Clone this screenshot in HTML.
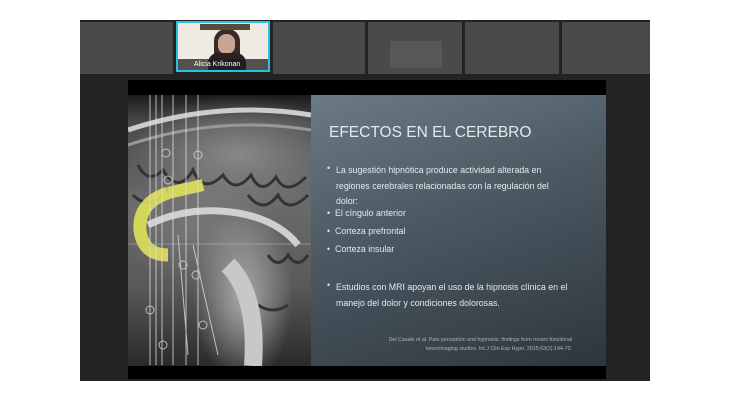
<!DOCTYPE html>
<html><head><style>
body{margin:0;width:730px;height:400px;background:#fff;position:relative;overflow:hidden;font-family:"Liberation Sans",sans-serif}
.outer{position:absolute;left:80px;top:20px;width:570px;height:361px;background:#232323}
.tile{position:absolute;top:22px;height:52px;background:#4a4a4a}
.slide{position:absolute;left:128px;top:80px;width:478px;height:299px;background:#000}
.brain{position:absolute;left:128px;top:95px;width:183px;height:271px;overflow:hidden;background:
radial-gradient(ellipse 50px 90px at 115px 200px,#aaa,transparent),
radial-gradient(ellipse 110px 60px at 110px 60px,#888,transparent),
radial-gradient(ellipse 80px 60px at 70px 130px,#777,transparent),
linear-gradient(#1a1a1a,#4a4a4a 10%,#6a6a6a 40%,#5a5a5a 70%,#2a2a2a)}
.panel{position:absolute;left:311px;top:95px;width:295px;height:271px;background:linear-gradient(160deg,#6b7b86 0%,#4b5862 45%,#2d363d 100%)}
.t{position:absolute;color:#e6e9ea;white-space:nowrap}
</style></head><body>
<div class="outer"></div>
<div class="tile" style="left:80px;width:93px"></div>
<div class="tile" style="left:176px;width:94px;background:#f0ebe2;border:2px solid #2bc0e0;top:21px;height:51px;box-sizing:border-box;overflow:hidden">
 <div style="position:absolute;left:36px;top:6px;width:26px;height:34px;border-radius:12px 12px 4px 4px;background:#3a2b28"></div>
 <div style="position:absolute;left:40px;top:11px;width:17px;height:20px;border-radius:8px;background:#c9a593"></div>
 <div style="position:absolute;left:30px;top:30px;width:38px;height:20px;border-radius:10px 10px 0 0;background:#2a2220"></div>
 <div style="position:absolute;left:22px;top:1px;width:50px;height:6px;background:#5a4a3a"></div>
 <div style="position:absolute;left:0;bottom:0;width:100%;height:11px;background:rgba(30,30,30,.75);color:#fff;font-size:7px;line-height:11px;padding-left:16px;box-sizing:border-box">Alicia Krikonan</div>
</div>
<div class="tile" style="left:273px;width:92px"></div>
<div class="tile" style="left:368px;width:94px"><div style="position:absolute;left:22px;top:19px;width:52px;height:27px;background:#575757"></div></div>
<div class="tile" style="left:465px;width:94px"></div>
<div class="tile" style="left:562px;width:88px"></div>
<div class="slide"></div>
<div class="brain">
<svg width="183" height="271" style="position:absolute;left:0;top:0">
<path d="M0 35 Q90 5 183 20" stroke="#ccc" stroke-width="5" fill="none"/>
<path d="M0 50 Q90 20 183 35" stroke="#999" stroke-width="3" fill="none"/>
<g stroke="#333" stroke-width="3" fill="none">
<path d="M10 70 q10 20 25 5 q15 25 30 0 q10 25 30 5 q12 20 28 0 q10 22 25 2 q10 20 30 0"/>
<path d="M5 100 q15 15 30 0 M120 100 q15 20 30 0 q10 20 30 0"/>
<path d="M140 160 q10 15 20 0 q10 15 20 0 M130 210 q15 10 30 0"/>
</g>
<path d="M20 130 Q60 110 110 118 Q150 125 170 150" stroke="#d0d0d0" stroke-width="7" fill="none"/>
<path d="M100 170 Q130 200 125 271" stroke="#c8c8c8" stroke-width="18" fill="none"/>
<path d="M40 98 Q10 108 12 135 Q15 160 40 160" stroke="#dfe257" stroke-width="13" fill="none" opacity=".9"/>
<path d="M40 98 L75 90" stroke="#dfe257" stroke-width="12" fill="none" opacity=".9"/>
<g stroke="#ddd" stroke-width="1" fill="none" opacity=".8">
<path d="M22 0V270M28 0V270M34 0V270M45 0V270M58 0V270M70 0V270M50 140L60 260M65 150L90 260"/>
<circle cx="38" cy="58" r="4"/><circle cx="40" cy="85" r="4"/><circle cx="70" cy="60" r="4"/><circle cx="55" cy="170" r="4"/><circle cx="68" cy="180" r="4"/><circle cx="22" cy="215" r="4"/><circle cx="75" cy="230" r="4"/><circle cx="35" cy="250" r="4"/>
</g>
<path d="M0 149H183" stroke="#bbb" stroke-width=".6"/>
</svg></div>
<div class="panel"></div>
<div class="t" style="left:329px;top:124px;font-size:15.5px">EFECTOS EN EL CEREBRO</div>
<div style="position:absolute;left:327px;top:163px;font-size:8.8px;color:#e6e9ea">
<div style="position:absolute;left:0;top:0">•</div><div style="position:absolute;left:9px;top:0;white-space:nowrap;line-height:15.5px">La sugestión hipnótica produce actividad alterada en<br>regiones cerebrales relacionadas con la regulación del<br>dolor:</div>
<div style="position:absolute;left:0;top:45px;white-space:nowrap">•&nbsp; El cíngulo anterior</div>
<div style="position:absolute;left:0;top:63px;white-space:nowrap">•&nbsp; Corteza prefrontal</div>
<div style="position:absolute;left:0;top:81px;white-space:nowrap">•&nbsp; Corteza insular</div>
<div style="position:absolute;left:0;top:117px;white-space:nowrap">•</div><div style="position:absolute;left:9px;top:117px;white-space:nowrap;line-height:15.5px">Estudios con MRI apoyan el uso de la hipnosis clínica en el<br>manejo del dolor y condiciones dolorosas.</div>
</div>
<div style="position:absolute;right:158px;top:336px;font-size:5.3px;line-height:9px;color:#aab3b8;text-align:right;white-space:nowrap">Del Casale et al. Pain perception and hypnosis: findings from recent functional<br>neuroimaging studies. Int J Clin Exp Hypn. 2015;63(2):144-70.</div>
</body></html>
